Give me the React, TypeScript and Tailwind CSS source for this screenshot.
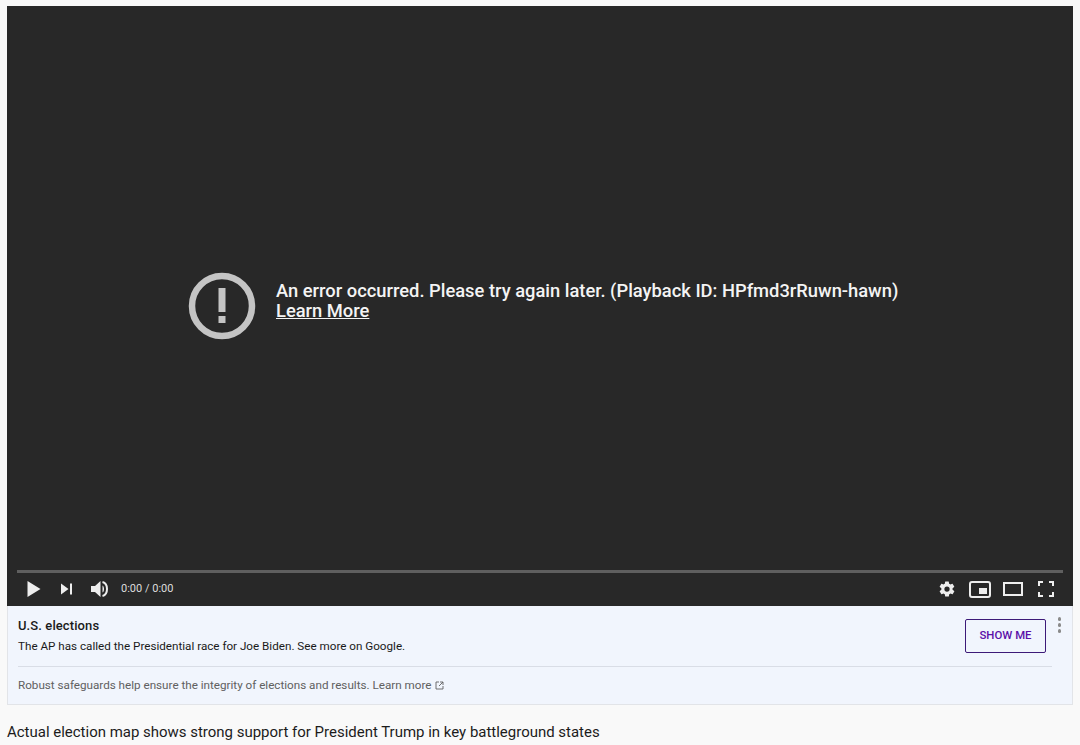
import React from 'react';

const App: React.FC = () => {
  return (
    <div className="h-[745px] w-[1080px] overflow-hidden bg-[#f9f9f9] pl-[7px] pr-[7px] pt-[6px] font-['Roboto',sans-serif]">
      <div className="flex h-[600px] flex-col bg-[#282828]">
        <div className="flex flex-1 items-center pl-[181px] pt-[26px]">
          <svg width="68" height="68" viewBox="0 0 68 68" className="mr-[20px] mt-[10px]">
            <circle cx="34" cy="34" r="30" fill="none" stroke="#c4c4c4" strokeWidth="6.500" />
            <rect x="30.500" y="16" width="7" height="24" fill="#c4c4c4" />
            <rect x="30.500" y="44" width="7" height="7" fill="#c4c4c4" />
          </svg>
          <div className="text-[18.330px] font-medium leading-[20px] text-[#f4f4f4]">
            <div>An error occurred. Please try again later. (Playback ID: HPfmd3rRuwn-hawn)</div>
            <div className="underline">Learn More</div>
          </div>
        </div>

        <div className="mx-[10px] h-[3px] bg-[#5f5f5f]" />
        <div className="flex h-[33px] items-center pb-[1px] pl-[18px] pr-[18px]">
          <svg width="16" height="18" viewBox="0 0 16 18">
            <path d="M2.500 1 L15.500 9 L2.500 17 Z" fill="#eeeeee" />
          </svg>
          <svg width="14" height="14" viewBox="0 0 14 14" className="ml-[18px]">
            <path d="M2 1.500 L9.500 7 L2 12.500 Z M11 1.500 H13 V12.500 H11 Z" fill="#eeeeee" />
          </svg>
          <svg width="19" height="18" viewBox="0 0 19 18" className="ml-[18px]">
            <path d="M0 6 H4 L9.500 1 V17 L4 12 H0 Z" fill="#eeeeee" />
            <path d="M11.500 5.500 C13.500 6.500 13.500 11.500 11.500 12.500 Z" fill="#eeeeee" />
            <path d="M11.500 2 C17.500 3.500 17.500 14.500 11.500 16" fill="none" stroke="#eeeeee" strokeWidth="2" />
          </svg>
          <span className="ml-[11px] -translate-y-[1px] text-[11px] leading-none text-[#dddddd]">0:00 / 0:00</span>
          <div className="ml-auto flex items-center">
            <svg width="18" height="18" viewBox="0 0 24 24">
              <path
                fill="#eeeeee"
                d="M19.400 13a7.500 7.500 0 0 0 0-2l2.100-1.600a.5.5 0 0 0 .1-.7l-2-3.500a.5.5 0 0 0-.6-.2l-2.500 1a7.300 7.300 0 0 0-1.700-1l-.4-2.600A.5.5 0 0 0 14 2h-4a.5.5 0 0 0-.5.400l-.4 2.600a7.300 7.300 0 0 0-1.700 1l-2.500-1a.5.5 0 0 0-.6.2l-2 3.500a.5.5 0 0 0 .1.700L4.500 11a7.500 7.500 0 0 0 0 2l-2.100 1.600a.5.5 0 0 0-.1.700l2 3.500a.5.5 0 0 0 .6.200l2.500-1c.5.400 1.100.700 1.700 1l.4 2.600a.5.5 0 0 0 .5.400h4a.5.5 0 0 0 .5-.400l.4-2.600a7.300 7.300 0 0 0 1.700-1l2.500 1a.5.5 0 0 0 .6-.2l2-3.500a.5.5 0 0 0-.1-.7zM12 15.500a3.500 3.500 0 1 1 0-7 3.500 3.500 0 0 1 0 7z"
              />
            </svg>
            <svg width="22" height="17" viewBox="0 0 22 17" className="ml-[13px]">
              <rect x="1" y="1" width="20" height="15" rx="2" fill="none" stroke="#eeeeee" strokeWidth="2" />
              <rect x="10" y="7" width="8" height="6" fill="#eeeeee" />
            </svg>
            <svg width="20" height="14" viewBox="0 0 20 14" className="ml-[12px]">
              <rect x="1" y="1" width="18" height="12" fill="none" stroke="#eeeeee" strokeWidth="2" />
            </svg>
            <svg width="16" height="16" viewBox="0 0 16 16" className="ml-[15px] mr-[1px]">
              <path d="M1 5 V1 H5 M11 1 H15 V5 M15 11 V15 H11 M5 15 H1 V11" fill="none" stroke="#eeeeee" strokeWidth="2" />
            </svg>
          </div>
        </div>
      </div>

      <div className="h-[99px] border-x border-b border-[#e2e4e8] bg-[#f1f5fd] pl-[10px] pr-[20px]">
        <div className="relative flex h-[61px] items-start justify-between border-b border-[#d9dde6]">
          <div>
            <div className="mt-[12px] text-[13px] font-medium leading-[16px] tracking-[0.1px] text-[#1a1a1a]">U.S. elections</div>
            <div className="mt-[4px] text-[11.660px] leading-[16px] text-[#1a1a1a]">
              The AP has called the Presidential race for Joe Biden. See more on Google.
            </div>
          </div>
          <button className="mr-[6px] mt-[13px] h-[34px] w-[81px] rounded-[2px] border border-[#3d1a78] text-[11.400px] font-medium text-[#5b0fa8]">
            SHOW ME
          </button>
          <div className="absolute -right-[9px] top-[11px] flex flex-col gap-[2.500px]">
            <span className="h-[3.500px] w-[3.500px] rounded-full bg-[#8a8a8a]" />
            <span className="h-[3.500px] w-[3.500px] rounded-full bg-[#8a8a8a]" />
            <span className="h-[3.500px] w-[3.500px] rounded-full bg-[#8a8a8a]" />
          </div>
        </div>
        <div className="mt-[10px] flex items-center text-[11.660px] leading-[16px] text-[#606060]">
          Robust safeguards help ensure the integrity of elections and results. Learn more
          <svg width="9" height="9" viewBox="0 0 9 9" className="ml-[4px]">
            <path d="M4 1 H1 V8 H8 V5 M5 1 H8 V4 M8 1 L4 5" fill="none" stroke="#606060" strokeWidth="0.900" />
          </svg>
        </div>
      </div>

      <div className="mt-[17px] text-[14.980px] leading-[20px] text-[#1c1c1c]">
        Actual election map shows strong support for President Trump in key battleground states
      </div>
    </div>
  );
};

export default App;
